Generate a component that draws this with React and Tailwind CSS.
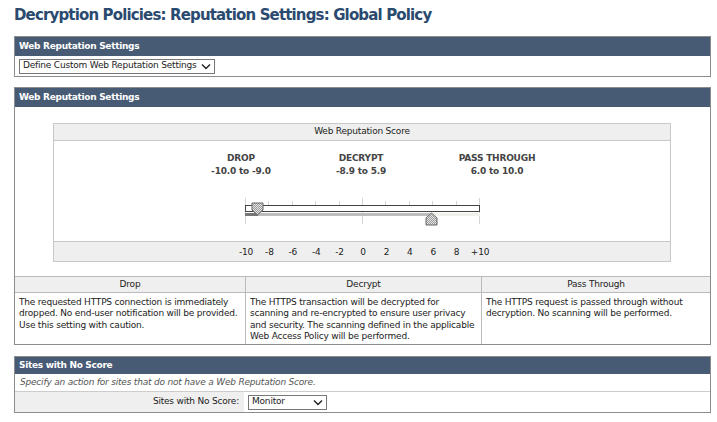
import React from 'react';

const font = "font-['DejaVu_Sans',Verdana,sans-serif]";

function SectionHeader({ children, h = 'h-[19px]' }) {
  return (
    <div className={`${h} bg-[#475b74] px-[4px] flex items-center text-white font-bold text-[9px] tracking-[-0.3px]`}>
      {children}
    </div>
  );
}

function Chevron() {
  return (
    <svg width="10" height="7" viewBox="0 0 10 7" className="shrink-0">
      <path d="M1 1.5 L5 5.5 L9 1.5" fill="none" stroke="#222" strokeWidth="1.4" />
    </svg>
  );
}

function Slider() {
  // track spans -10..+10 over 234px
  const ticks = [-10, -8, -6, -4, -2, 0, 2, 4, 6, 8, 10];
  const px = (v) => ((v + 10) / 20) * 234;
  return (
    <div className="relative w-[236px] h-[32px]">
      {ticks.map((t) => {
        const major = t === -10 || t === 0 || t === 10;
        return (
          <div
            key={t}
            className="absolute w-px bg-[#d4d4d4]"
            style={{ left: px(t), top: major ? 0 : 3, height: major ? 26 : 5 }}
          />
        );
      })}
      <div className="absolute left-0 top-[7px] w-[235px] h-[7px] border border-[#444] bg-white" />
      <div className="absolute left-0 top-[15px] h-[3px] w-[13px] bg-[#777]" />
      <div className="absolute left-[13px] top-[15px] h-[3px] w-[174px] bg-[#bdbdbd]" />
      <div className="absolute left-[187px] top-[15px] h-[3px] w-[48px] bg-[#f1f1ea]" />
      {/* drop handle, pointing down */}
      <svg className="absolute left-[6px] top-[4px]" width="13" height="14" viewBox="0 0 13 14">
        <defs>
          <pattern id="chk" width="2" height="2" patternUnits="userSpaceOnUse">
            <rect width="2" height="2" fill="#e6e6e6" />
            <rect width="1" height="1" fill="#9a9a9a" />
            <rect x="1" y="1" width="1" height="1" fill="#9a9a9a" />
          </pattern>
        </defs>
        <path d="M1 1 H12 V8 L6.5 13 L1 8 Z" fill="url(#chk)" stroke="#666" strokeWidth="1" />
      </svg>
      {/* pass-through handle, pointing up */}
      <svg className="absolute left-[180px] top-[14px]" width="13" height="14" viewBox="0 0 13 14">
        <path d="M1 13 H12 V6 L6.5 1 L1 6 Z" fill="url(#chk)" stroke="#666" strokeWidth="1" />
      </svg>
    </div>
  );
}

export default function App() {
  const axis = ['-10', '-8', '-6', '-4', '-2', '0', '2', '4', '6', '8', '+10'];
  return (
    <div className={`min-h-screen bg-white pl-[14px] pr-[6px] pt-[5px] text-[9px] tracking-[-0.2px] text-[#222] ${font}`}>
      <h1 className="text-[15px] leading-[20px] font-bold tracking-[-0.85px] text-[#2b4a6f]">
        Decryption Policies: Reputation Settings: Global Policy
      </h1>

      {/* Web Reputation Settings - mode */}
      <div className="mt-[11px] border border-[#8c8c8c]">
        <SectionHeader>Web Reputation Settings</SectionHeader>
        <div className="px-[4px] py-[2px] h-[20px] flex items-center">
          <div className="h-[15px] border border-[#777] flex items-center gap-[4px] px-[3px]">
            <span>Define Custom Web Reputation Settings</span>
            <Chevron />
          </div>
        </div>
      </div>

      {/* Web Reputation Settings - score */}
      <div className="mt-[10px] border border-[#8c8c8c]">
        <SectionHeader>Web Reputation Settings</SectionHeader>
        <div className="pt-[16px] pb-[14px] pl-[38px] pr-[39px]">
          <div className="border border-[#c8c8c8]">
            <div className="h-[17px] bg-[#efefef] border-b border-[#c8c8c8] flex items-center justify-center">
              Web Reputation Score
            </div>
            <div className="h-[100px] relative">
              <div className="flex pl-[127px] pt-[11px] font-bold text-[#444] leading-[13px]">
                <div className="w-[120px] text-center">DROP<br />-10.0 to -9.0</div>
                <div className="w-[120px] text-center">DECRYPT<br />-8.9 to 5.9</div>
                <div className="w-[152px] text-center">PASS THROUGH<br />6.0 to 10.0</div>
              </div>
              <div className="absolute left-[191px] top-[57px]">
                <Slider />
              </div>
            </div>
            <div className="h-[20px] bg-[#efefef] border-t border-[#c8c8c8] relative">
              {axis.map((a, i) => (
                <span
                  key={a}
                  className="absolute top-[4px] -translate-x-1/2"
                  style={{ left: 192 + i * 23.4 }}
                >
                  {a}
                </span>
              ))}
            </div>
          </div>
        </div>
        <div className="grid grid-cols-[230px_236px_1fr] border-t border-[#bbb]">
          <div className="h-[16px] bg-[#efefef] border-b border-[#bbb] flex items-center justify-center">Drop</div>
          <div className="h-[16px] bg-[#efefef] border-b border-l border-[#bbb] flex items-center justify-center">Decrypt</div>
          <div className="h-[16px] bg-[#efefef] border-b border-l border-[#bbb] flex items-center justify-center">Pass Through</div>
          <div className="px-[4px] pt-[4px] pb-[2px] leading-[11.3px]">
            The requested HTTPS connection is immediately dropped. No end-user notification will be provided. Use this setting with caution.
          </div>
          <div className="px-[4px] pt-[4px] pb-[2px] leading-[11.3px] border-l border-[#bbb]">
            The HTTPS transaction will be decrypted for scanning and re-encrypted to ensure user privacy and security. The scanning defined in the applicable Web Access Policy will be performed.
          </div>
          <div className="px-[4px] pt-[4px] pb-[2px] leading-[11.3px] border-l border-[#bbb]">
            The HTTPS request is passed through without decryption. No scanning will be performed.
          </div>
        </div>
      </div>

      {/* Sites with No Score */}
      <div className="mt-[11px] border border-[#8c8c8c]">
        <SectionHeader h="h-[17px]">Sites with No Score</SectionHeader>
        <div className="h-[18px] px-[5px] flex items-center italic text-[#555] border-b border-[#ccc]">
          Specify an action for sites that do not have a Web Reputation Score.
        </div>
        <div className="grid grid-cols-[229px_1fr] h-[20px]">
          <div className="bg-[#efefef] flex items-center justify-end pr-[5px]">Sites with No Score:</div>
          <div className="flex items-center pl-[4px]">
            <div className="h-[15px] w-[79px] border border-[#777] flex items-center justify-between px-[3px]">
              <span>Monitor</span>
              <Chevron />
            </div>
          </div>
        </div>
      </div>
    </div>
  );
}
